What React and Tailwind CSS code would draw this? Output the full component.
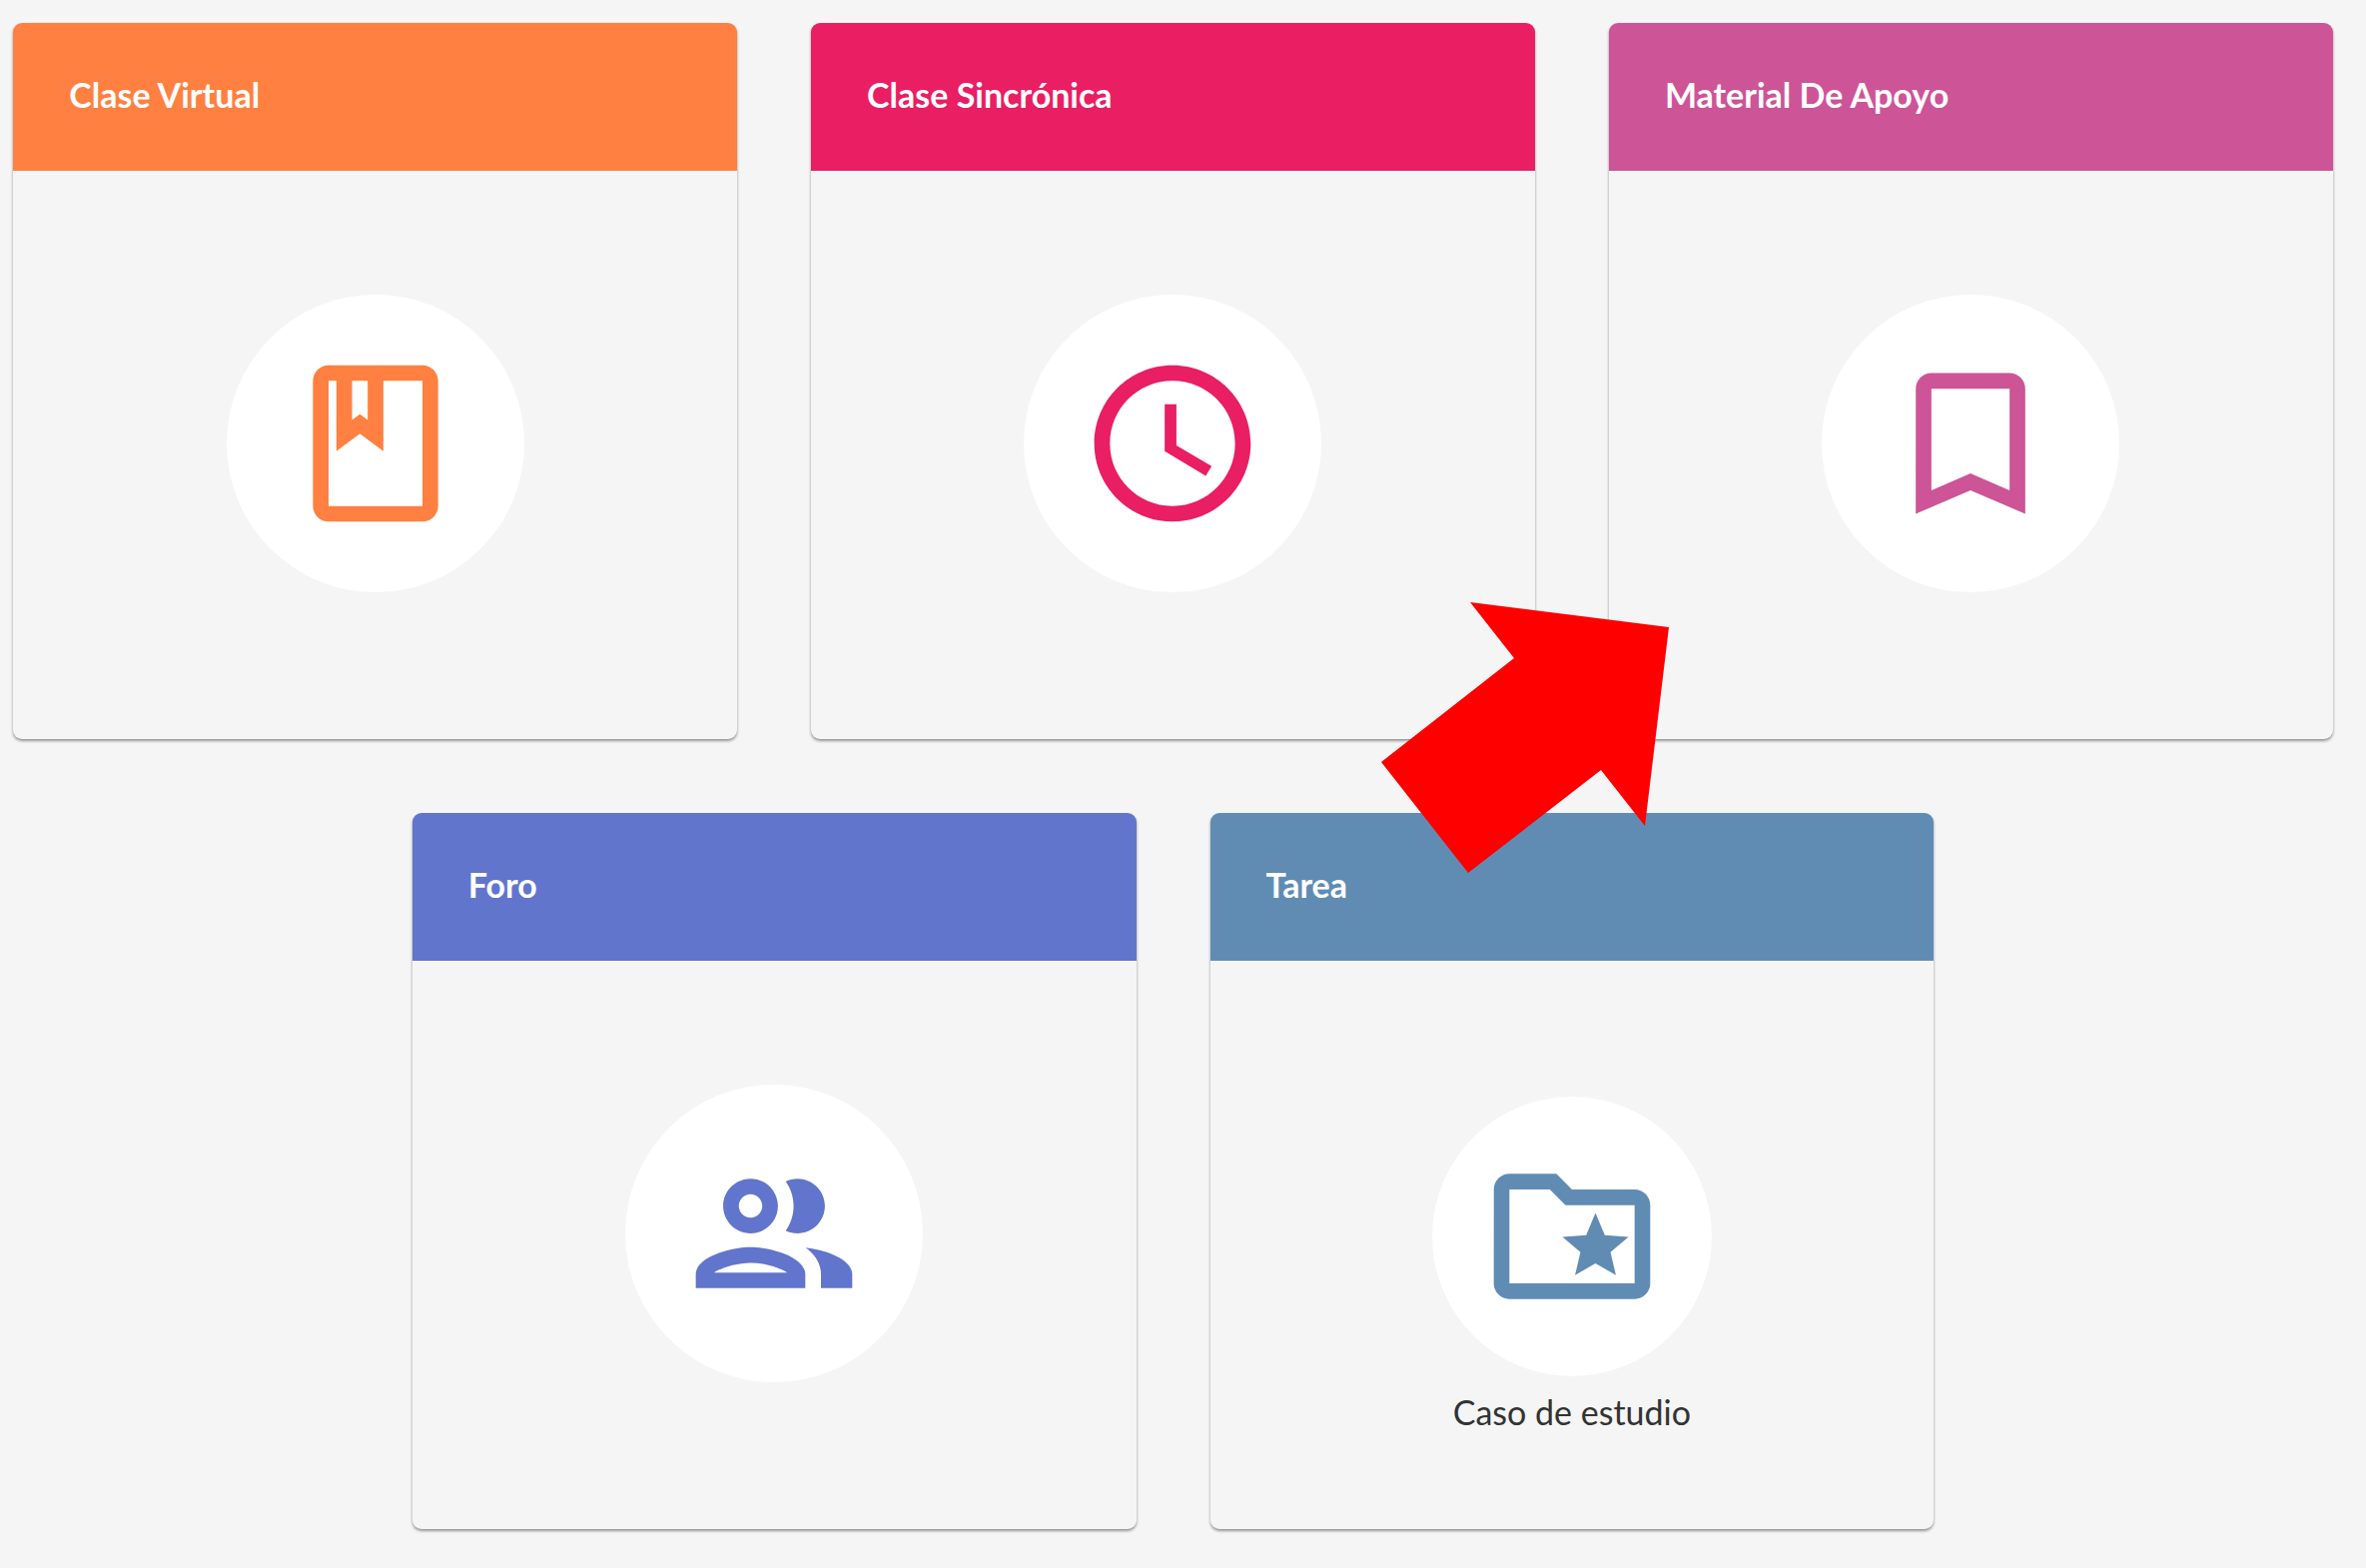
const icons = {
  book: (
    <path d="M18 2H6c-1.1 0-2 .9-2 2v16c0 1.1.9 2 2 2h12c1.1 0 2-.9 2-2V4c0-1.1-.9-2-2-2zM9 4h2v5l-1-.75L9 9V4zm9 16H6V4h1v9l3-2.25L13 13V4h5v16z" />
  ),
  clock: (
    <path d="M11.99 2C6.47 2 2 6.48 2 12s4.47 10 9.99 10C17.52 22 22 17.52 22 12S17.52 2 11.99 2zM12 20c-4.42 0-8-3.58-8-8s3.58-8 8-8 8 3.58 8 8-3.58 8-8 8zm.5-13H11v6l5.25 3.15.75-1.23-4.5-2.67z" />
  ),
  bookmark: (
    <path d="M17 3H7c-1.1 0-1.99.9-1.99 2L5 21l7-3 7 3V5c0-1.1-.9-2-2-2zm0 15l-5-2.18L7 18V5h10v13z" />
  ),
  people: (
    <path d="M9 13.75c-2.34 0-7 1.17-7 3.5V19h14v-1.75c0-2.33-4.66-3.5-7-3.5zM4.34 17c.84-.58 2.87-1.25 4.66-1.25s3.82.67 4.66 1.25H4.34zM9 12c1.93 0 3.5-1.57 3.5-3.5S10.93 5 9 5 5.5 6.57 5.5 8.5 7.07 12 9 12zm0-5c.83 0 1.5.67 1.5 1.5S9.83 10 9 10s-1.5-.67-1.5-1.5S8.17 7 9 7zm7.04 6.81c1.16.84 1.96 1.96 1.96 3.44V19h4v-1.75c0-2.02-3.5-3.17-5.96-3.44zM15 12c1.93 0 3.5-1.57 3.5-3.5S16.93 5 15 5c-.54 0-1.04.13-1.5.35.63.89 1 1.98 1 3.15s-.37 2.26-1 3.15c.46.22.96.35 1.5.35z" />
  ),
  folder: (
    <>
      <path d="M20 6h-8l-2-2H4c-1.1 0-1.99.9-1.99 2L2 18c0 1.1.9 2 2 2h16c1.1 0 2-.9 2-2V8c0-1.1-.9-2-2-2zm0 12H4V6h5.17l2 2H20v10z" />
      <path d="M15 9l1.19 2.85 3.03.2-2.3 1.95.69 2.95L15 15.45 12.39 16.95l.69-2.95-2.3-1.95 3.03-.2z" />
    </>
  ),
};

function Card({ title, icon, header, tint, caption, children }) {
  return (
    <div className="relative w-[31.2%]">
      <a
        href="#"
        className="flex h-full min-h-[717px] flex-col overflow-hidden rounded-[9px] bg-[#f5f5f5] shadow-[0_2px_3px_rgba(0,0,0,0.4)]"
      >
        <h2 className={`flex h-[148px] items-center px-14 pb-1 text-[34px] leading-10 font-bold text-white ${header}`}>
          {title}
        </h2>
        <div className={`flex flex-col items-center ${caption ? "pt-[136px]" : "pt-[124px]"}`}>
          <span
            className={`flex items-center justify-center rounded-full bg-white ${tint} ${caption ? "size-[280px]" : "size-[298px]"}`}
          >
            <svg viewBox="0 0 24 24" fill="currentColor" className="size-[188px]" aria-hidden="true">
              {icons[icon]}
            </svg>
          </span>
          {caption && <p className="mt-4 text-[34px] leading-10 text-[#333]">{caption}</p>}
        </div>
      </a>
      {children}
    </div>
  );
}

function Arrow() {
  return (
    <svg
      viewBox="0 0 288 271"
      className="pointer-events-none absolute top-[580px] -left-[228px] z-10 h-[271px] w-[288px]"
      aria-hidden="true"
    >
      <polygon points="89,0 288,25 264,224 220,168 87,271 0,160 133,56" fill="#ff0000" />
    </svg>
  );
}

export default function App() {
  return (
    <main className="flex min-h-screen flex-col gap-[74px] bg-[#f5f5f5] pt-[23px] pr-[33px] pb-[38px] pl-[13px] font-['Lato',sans-serif]">
      <div className="flex justify-center gap-[74px]">
        <Card title="Clase Virtual" icon="book" header="bg-[#ff8040]" tint="text-[#ff8040]" />
        <Card title="Clase Sincrónica" icon="clock" header="bg-[#e91e63]" tint="text-[#e91e63]" />
        <Card title="Material De Apoyo" icon="bookmark" header="bg-[#cc5497]" tint="text-[#cc5497]">
          <Arrow />
        </Card>
      </div>
      <div className="flex justify-center gap-[74px]">
        <Card title="Foro" icon="people" header="bg-[#6275cc]" tint="text-[#6275cc]" />
        <Card title="Tarea" icon="folder" header="bg-[#608cb4]" tint="text-[#608cb4]" caption="Caso de estudio" />
      </div>
    </main>
  );
}
